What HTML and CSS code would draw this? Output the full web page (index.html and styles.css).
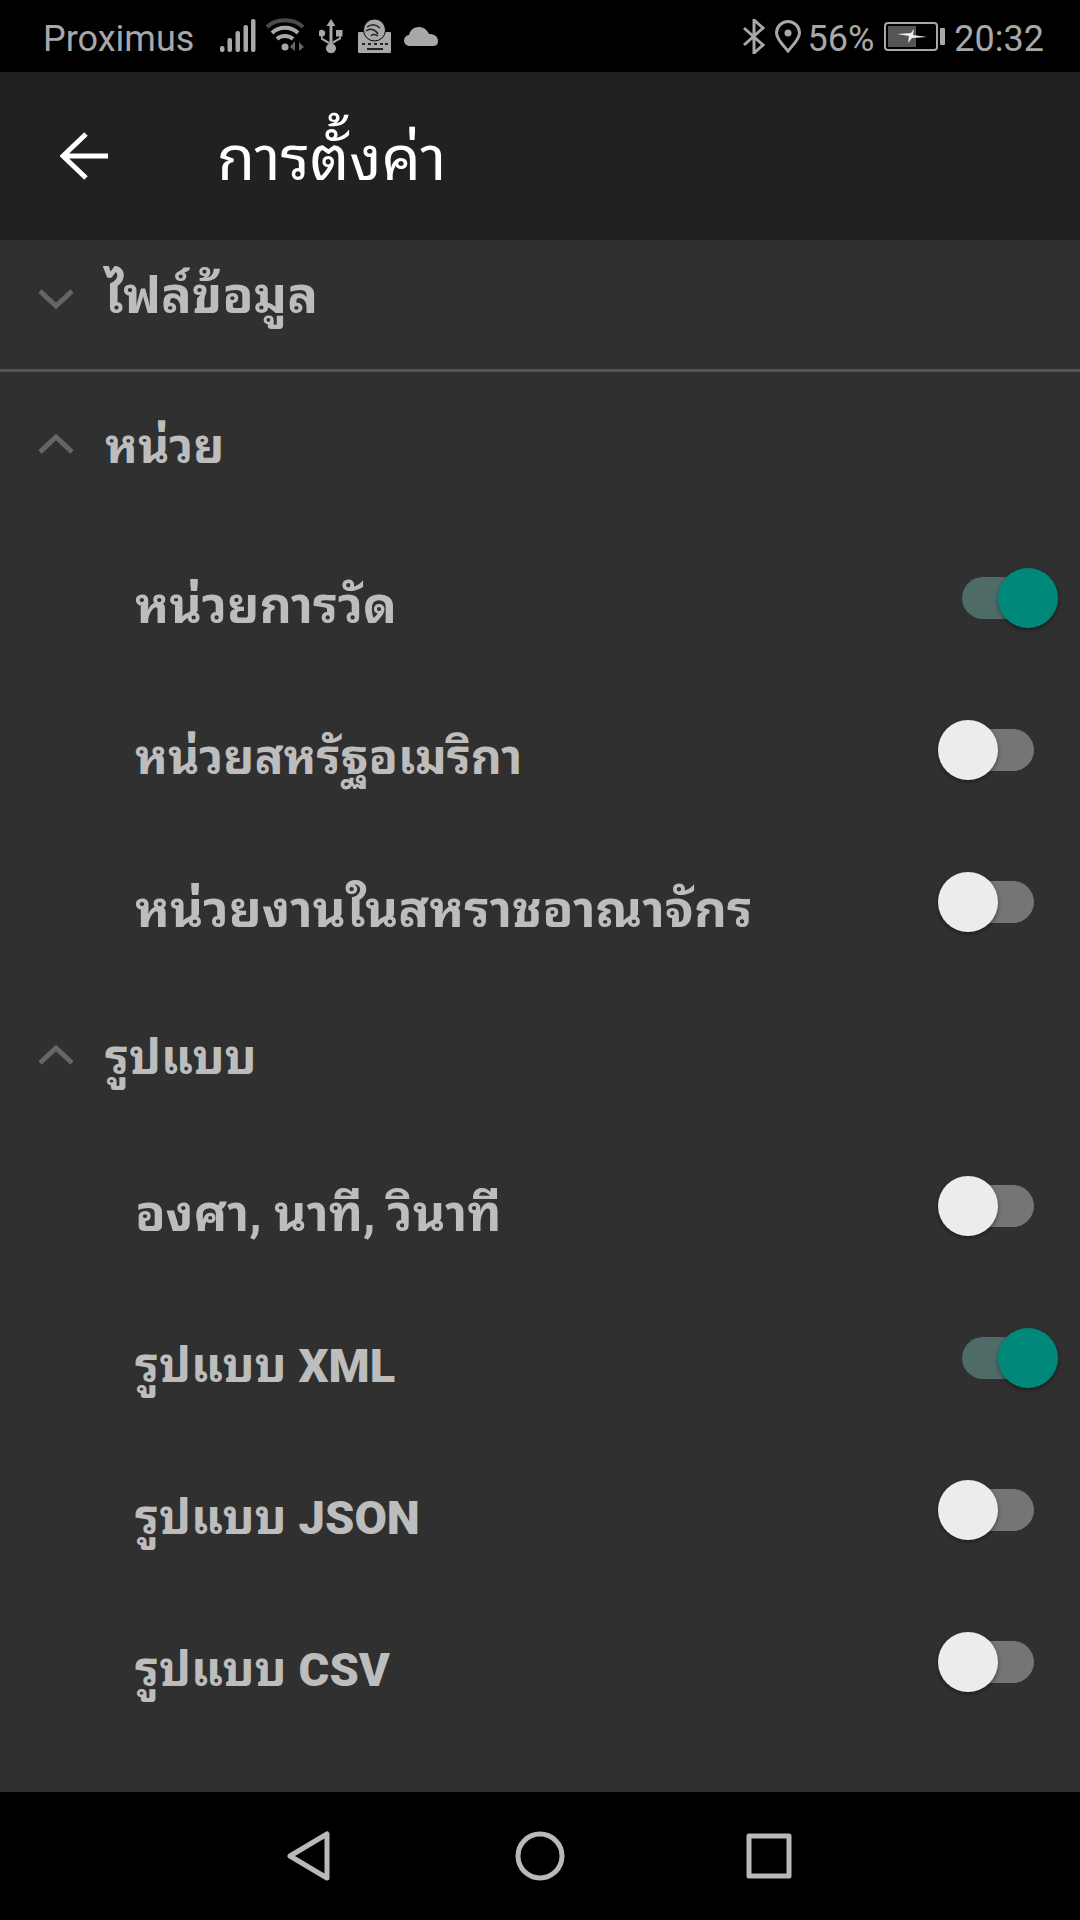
FILE: index.html
```html
<!DOCTYPE html>
<html lang="th">

<head>
    <meta charset="UTF-8">
    <meta name="viewport" content="width=device-width, initial-scale=1.0">
    <title>การตั้งค่า</title>
    <link rel="stylesheet" href="styles.css">
</head>

<body>
    <div class="phone">
        <!-- Status bar -->
        <div class="status">
            <div class="status-left">
                <span class="carrier">Proximus</span>
                <svg class="ic-signal" width="36" height="34" viewBox="0 0 36 34" fill="#a8a8a8">
                    <rect x="0" y="27" width="4.5" height="6" rx="2"/>
                    <rect x="7.5" y="19" width="4.5" height="14" rx="2"/>
                    <rect x="15.5" y="12" width="4.5" height="21" rx="2"/>
                    <rect x="23.5" y="6" width="4.5" height="27" rx="2"/>
                    <rect x="31" y="0" width="4.5" height="33" rx="2"/>
                </svg>
                <svg class="ic-wifi" width="40" height="36" viewBox="0 0 40 36" fill="none" stroke-width="4">
                    <path d="M2 9C11 0 29 0 38 9" stroke="#4a4a4a"/>
                    <path d="M7 15C14 8 26 8 33 15" stroke="#a8a8a8"/>
                    <path d="M12 21C16 17 24 17 28 21" stroke="#a8a8a8"/>
                    <circle cx="20" cy="29" r="3.5" fill="#a8a8a8" stroke="none"/>
                    <path d="M30 23v10l-5-4zM34 24l5 5-5 4z" fill="#666" stroke="none"/>
                </svg>
                <svg class="ic-usb" width="24" height="35" viewBox="0 0 24 35" fill="#a8a8a8">
                    <path d="M12 0l4.5 7h-3v17.500a5 5 0 1 1-3 0V7h-3z"/>
                    <path d="M3.500 11a3.300 3.300 0 0 1 0 6.500V19l7 4v2.500l-8.500-5V17.500a3.300 3.300 0 0 1 1.500-6.500z"/>
                    <path d="M17 11h6.500v6.500H22V20l-8.500 5v-2.500l7-4v-1H17z"/>
                </svg>
                <svg class="ic-keys" width="34" height="34" viewBox="0 0 34 34">
                    <rect x="0" y="13" width="33" height="21" rx="1" fill="#a8a8a8"/>
                    <circle cx="16.500" cy="11" r="11" fill="#a8a8a8" stroke="#000" stroke-width="1"/>
                    <path d="M9 8c4-3 9-3 13 1M8 12c4-3 9-2 12 3M13 17c1-2 4-2 7 0" fill="none" stroke="#222" stroke-width="1.500"/>
                    <path d="M4 25h3M10 25h3M16 25h3M22 25h3M27 25h3M9 30h16" stroke="#222" stroke-width="2"/>
                </svg>
                <svg class="ic-cloud" width="34" height="19" viewBox="0 0 34 19" fill="#a8a8a8">
                    <path d="M6 19a5.500 5.500 0 0 1-1-11C6 3 10 0 15 0c5 0 8 3 10 7 5 0 9 2.500 9 7s-3 5-5 5z"/>
                </svg>
            </div>
            <div class="status-right">
                <svg class="ic-bt" width="22" height="35" viewBox="0 0 22 35" fill="none" stroke="#a8a8a8" stroke-width="3">
                    <path d="M1 9l19 17-9 8V1l9 8L1 26"/>
                </svg>
                <svg class="ic-pin" width="26" height="33" viewBox="0 0 26 33" fill="none" stroke="#a8a8a8" stroke-width="3">
                    <path d="M13 31C8 25 1.500 19 1.500 13a11.500 11.500 0 0 1 23 0C24.500 19 18 25 13 31z"/>
                    <circle cx="13" cy="13" r="3.500" fill="#a8a8a8" stroke="none"/>
                </svg>
                <span class="pct">56%</span>
                <svg class="ic-batt" width="62" height="29" viewBox="0 0 62 29">
                    <rect x="1" y="1" width="52" height="27" rx="3" fill="none" stroke="#a8a8a8" stroke-width="2"/>
                    <rect x="4" y="4" width="28" height="21" fill="#555"/>
                    <path d="M13 12l14-1 3-4-1 6 14 2-15 1-4 5 1-7z" fill="#eee"/>
                    <rect x="56" y="6" width="5" height="17" rx="1" fill="#a8a8a8"/>
                </svg>
                <span class="clock">20:32</span>
            </div>
        </div>

        <!-- Toolbar -->
        <div class="toolbar">
            <svg class="back" width="48" height="48" viewBox="0 0 48 48" fill="none" stroke="#fff" stroke-width="5">
                <path d="M48 24H4M26 2L3 24l23 22"/>
            </svg>
            <h1 class="title">การตั้งค่า</h1>
        </div>

        <div class="content">
            <div class="section section-file">
                <svg class="chev" width="36" height="20" viewBox="0 0 36 20" fill="none" stroke="#666" stroke-width="5">
                    <path d="M2 2l16 15L34 2"/>
                </svg>
                <span>ไฟล์ข้อมูล</span>
            </div>

            <div class="section">
                <svg class="chev" width="36" height="20" viewBox="0 0 36 20" fill="none" stroke="#666" stroke-width="5">
                    <path d="M2 18L18 3l16 15"/>
                </svg>
                <span>หน่วย</span>
            </div>
            <div class="row"><span>หน่วยการวัด</span><div class="toggle on"><i></i></div></div>
            <div class="row"><span class="tight">หน่วยสหรัฐอเมริกา</span><div class="toggle"><i></i></div></div>
            <div class="row"><span class="wide">หน่วยงานในสหราชอาณาจักร</span><div class="toggle"><i></i></div></div>

            <div class="section">
                <svg class="chev" width="36" height="20" viewBox="0 0 36 20" fill="none" stroke="#666" stroke-width="5">
                    <path d="M2 18L18 3l16 15"/>
                </svg>
                <span>รูปแบบ</span>
            </div>
            <div class="row"><span>องศา, นาที, วินาที</span><div class="toggle"><i></i></div></div>
            <div class="row"><span class="tight">รูปแบบ <b class="lat">XML</b></span><div class="toggle on"><i></i></div></div>
            <div class="row"><span class="tight">รูปแบบ <b class="lat">JSON</b></span><div class="toggle"><i></i></div></div>
            <div class="row"><span class="tight">รูปแบบ <b class="lat">CSV</b></span><div class="toggle"><i></i></div></div>
        </div>

        <!-- Nav bar -->
        <div class="nav">
            <svg width="43" height="50" viewBox="0 0 43 50" fill="none" stroke="#b9b9b9" stroke-width="5" stroke-linejoin="round">
                <path d="M3 25L40 3v44z"/>
            </svg>
            <svg class="nav-home" width="50" height="50" viewBox="0 0 50 50" fill="none" stroke="#b9b9b9" stroke-width="5">
                <circle cx="25" cy="25" r="22"/>
            </svg>
            <svg width="46" height="46" viewBox="0 0 46 46" fill="none" stroke="#b9b9b9" stroke-width="5" stroke-linejoin="round">
                <rect x="3" y="3" width="40" height="40"/>
            </svg>
        </div>
    </div>
</body>

</html>
```

FILE: styles.css
```css
* {
    box-sizing: border-box;
}

body {
    margin: 0;
    background-color: #000;
    font-family: Roboto, "Noto Sans Thai Looped", "Noto Sans", sans-serif;
}

.phone {
    width: 1080px;
    height: 1920px;
    display: flex;
    flex-direction: column;
    overflow: hidden;
}

.status {
    height: 72px;
    flex: none;
    background-color: #000;
    color: #a8a8a8;
    font-size: 36px;
    display: flex;
    justify-content: space-between;
    align-items: center;
    padding: 0 36px 0 43px;
}

.status span {
    margin-top: 5px;
}

.status-left,
.status-right {
    display: flex;
    align-items: center;
}

.ic-signal {
    margin-left: 26px;
}

.ic-wifi {
    margin-left: 9px;
}

.ic-usb {
    margin-left: 14px;
}

.ic-keys {
    margin-left: 15px;
}

.ic-cloud {
    margin-left: 12px;
}

.ic-pin {
    margin-left: 10px;
}

.pct {
    margin-left: 7px;
}

.ic-batt {
    margin-left: 10px;
}

.clock {
    margin-left: 8px;
}

.toolbar {
    height: 168px;
    flex: none;
    background-color: #212121;
    display: flex;
    align-items: center;
    padding-left: 60px;
}

.title {
    margin: 0 0 8px 109px;
    font-size: 62px;
    font-weight: 400;
    color: #fff;
}

.content {
    flex: 1;
    background-color: #303030;
    color: #bdbdbd;
    font-size: 50px;
    font-weight: 700;
}

.lat {
    font-size: 47px;
}

.section {
    height: 152px;
    display: flex;
    align-items: center;
    gap: 31px;
    padding: 0 0 14px 38px;
    font-size: 48px;
}

.section span {
    margin-bottom: 6px;
}

.section-file {
    height: 132px;
    padding-bottom: 12px;
    font-size: 51px;
    border-bottom: 3px solid #555;
}

.section-file span {
    margin-bottom: 18px;
}

.section-file + .section {
    height: 158px;
}

.row {
    height: 152px;
    display: flex;
    justify-content: space-between;
    align-items: center;
    padding: 0 46px 12px 135px;
}

.tight {
    font-size: 48px;
}

.wide {
    font-size: 51px;
}

.toggle {
    position: relative;
    width: 72px;
    height: 42px;
    margin-bottom: 5px;
    border-radius: 21px;
    background-color: #757575;
}

.toggle i {
    position: absolute;
    top: -9px;
    left: -24px;
    width: 60px;
    height: 60px;
    border-radius: 50%;
    background-color: #ececec;
    box-shadow: 0 2px 4px rgba(0, 0, 0, 0.4);
}

.toggle.on {
    background-color: #4f6b68;
}

.toggle.on i {
    left: 36px;
    background-color: #00897b;
}

.nav {
    height: 128px;
    flex: none;
    background-color: #000;
    display: flex;
    justify-content: center;
    align-items: center;
    padding-right: 2px;
}

.nav-home {
    margin: 0 181px 0 185px;
}
```
